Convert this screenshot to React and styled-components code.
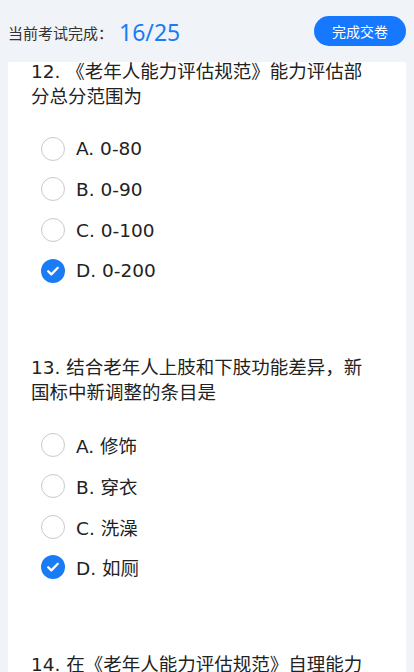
import React from "react";
import styled, { createGlobalStyle } from "styled-components";

const questions = [
  {
    no: 12,
    title: "《老年人能力评估规范》能力评估部分总分范围为",
    options: ["0-80", "0-90", "0-100", "0-200"],
    answer: 3,
  },
  {
    no: 13,
    title: "结合老年人上肢和下肢功能差异，新国标中新调整的条目是",
    options: ["修饰", "穿衣", "洗澡", "如厕"],
    answer: 3,
  },
  {
    no: 14,
    title: "在《老年人能力评估规范》自理能力评估中，以下哪项不属于评估内容",
    options: ["进食", "修饰", "洗澡", "认知"],
    answer: -1,
  },
];

const letters = ["A", "B", "C", "D"];

const App = () => {
  return (
    <Page>
      <GlobalStyle />
      <Header>
        <Progress>
          当前考试完成：<Count>16/25</Count>
        </Progress>
        <SubmitButton>完成交卷</SubmitButton>
      </Header>
      <Scroll>
        <Card>
          {questions.map((q) => (
            <Question key={q.no}>
              <Title>
                {q.no}. {q.title}
              </Title>
              <Options>
                {q.options.map((opt, i) => (
                  <Option key={i}>
                    <Radio checked={i === q.answer}>
                      {i === q.answer && (
                        <svg width="14" height="14" viewBox="0 0 14 14">
                          <path
                            d="M2.2 7.3l3.1 3.1 6.5-6.6"
                            fill="none"
                            stroke="#fff"
                            strokeWidth="2.3"
                            strokeLinecap="round"
                            strokeLinejoin="round"
                          />
                        </svg>
                      )}
                    </Radio>
                    <Label>
                      {letters[i]}. {opt}
                    </Label>
                  </Option>
                ))}
              </Options>
            </Question>
          ))}
        </Card>
      </Scroll>
    </Page>
  );
};

export default App;

const GlobalStyle = createGlobalStyle`
  html, body {
    margin: 0;
    padding: 0;
    background: #f0f3f8;
  }
  body {
    font-family: "DejaVu Sans", "Noto Sans CJK SC", sans-serif;
    color: #222;
  }
`;

const Page = styled.div`
  width: 414px;
  height: 672px;
  display: flex;
  flex-direction: column;
  overflow: hidden;
  background: #f0f3f8;
`;

const Header = styled.div`
  height: 62px;
  flex-shrink: 0;
  display: flex;
  align-items: center;
  justify-content: space-between;
  padding: 0 8px;
  box-sizing: border-box;
`;

const Progress = styled.div`
  display: flex;
  align-items: center;
  font-family: "Noto Sans CJK SC", sans-serif;
  font-size: 15px;
  color: #333;
  padding-top: 2px;
`;

const Count = styled.span`
  margin-left: 6px;
  font-size: 23px;
  color: #1a7cf5;
  font-family: "Noto Sans", sans-serif;
`;

const SubmitButton = styled.button`
  width: 92px;
  height: 30px;
  border: none;
  border-radius: 15px;
  background: #1677ff;
  color: #fff;
  font-family: "Noto Sans CJK SC", sans-serif;
  font-size: 14px;
  padding: 0;
`;

const Scroll = styled.div`
  flex: 1;
  overflow: hidden;
  padding: 0 8px;
`;

const Card = styled.div`
  background: #fff;
  margin-top: -3.5px;
  padding: 0 28px 0 23px;
`;

const Question = styled.div`
  padding-bottom: 64px;
`;

const Title = styled.div`
  font-size: 18.5px;
  line-height: 25px;
  color: #222;
`;

const Options = styled.div`
  margin-top: 20px;
  padding-left: 10px;
`;

const Option = styled.div`
  height: 40.67px;
  display: flex;
  align-items: center;
`;

const Radio = styled.span`
  width: 24px;
  height: 24px;
  border-radius: 50%;
  box-sizing: border-box;
  border: ${(p) => (p.checked ? "none" : "1px solid #c8c9cc")};
  background: ${(p) => (p.checked ? "#1a7cf5" : "#fff")};
  display: flex;
  align-items: center;
  justify-content: center;
  flex-shrink: 0;
`;

const Label = styled.span`
  margin-left: 11px;
  font-size: 18.5px;
  color: #222;
`;
